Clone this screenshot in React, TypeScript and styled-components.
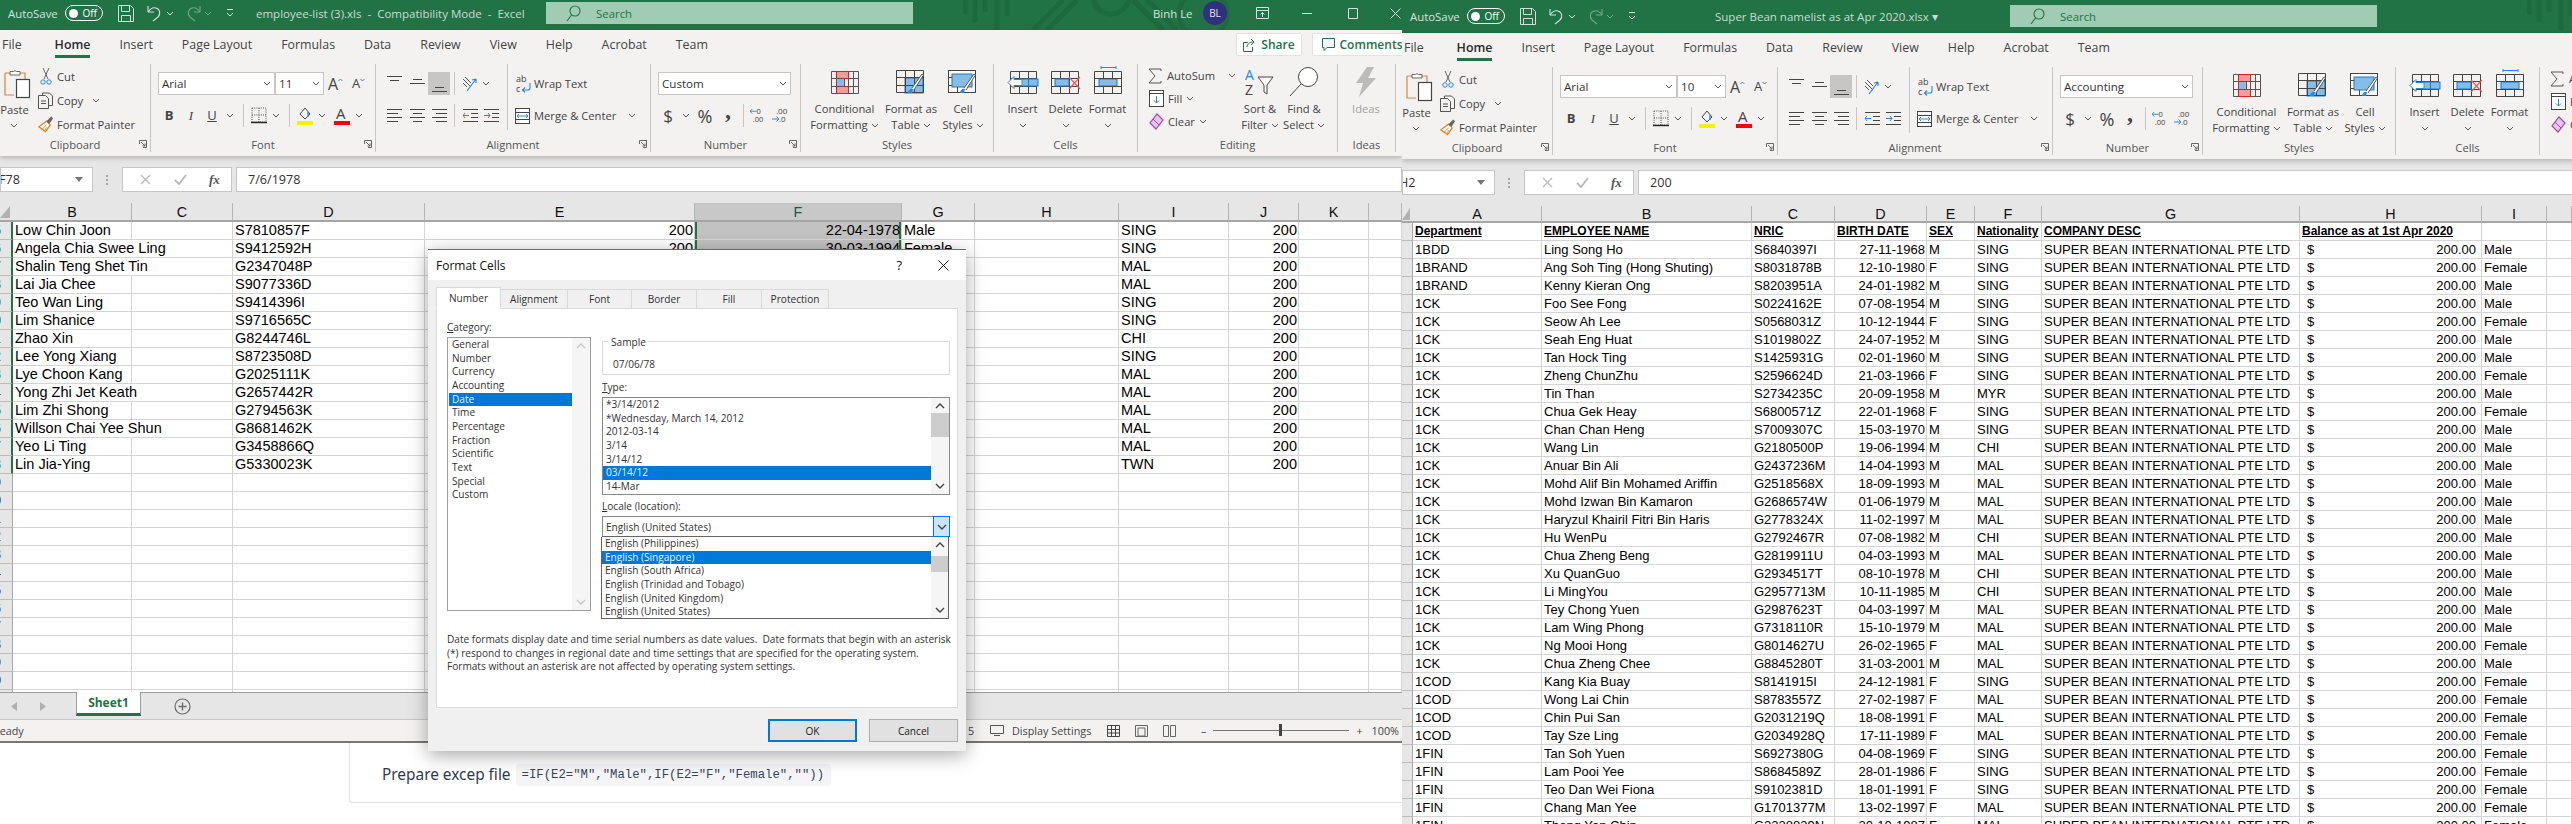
import type { ReactNode } from 'react'
import styled, { createGlobalStyle } from 'styled-components'

const uiFont = `"Open Sans", "Noto Sans", sans-serif`
const cellFont = `"Liberation Sans", Arial, sans-serif`
const green = '#217346'

const GlobalStyle = createGlobalStyle`
  html, body { margin: 0; padding: 0; background: #fff; overflow: hidden; }
  * { box-sizing: border-box; }
`

const Page = styled.div`
  position: relative;
  display: flex;
  width: 2572px;
  height: 824px;
  overflow: hidden;
  background: #fff;
  font-family: ${uiFont};
`

const LeftColumn = styled.div`
  width: 1402px;
  flex: none;
  display: flex;
  flex-direction: column;
`

const RightColumn = styled.div`
  width: 1170px;
  flex: none;
`

const Window = styled.div<{ $height: number }>`
  display: flex;
  flex-direction: column;
  width: 100%;
  height: ${(p) => p.$height}px;
  overflow: hidden;
  background: #fff;
`

/* ---------- title bar ---------- */

const TitleBar = styled.div<{ $height: number }>`
  position: relative;
  flex: none;
  display: flex;
  align-items: flex-end;
  width: 1402px;
  height: ${(p) => p.$height}px;
  background: ${green};
  color: #d3e5db;
  font-size: 11.4px;
`

const TitleInner = styled.div`
  position: relative;
  display: flex;
  align-items: center;
  width: 100%;
  height: 26px;
  margin-bottom: 4px;
`

const Pattern = styled.svg<{ $left: number }>`
  position: absolute;
  top: 0;
  left: ${(p) => p.$left}px;
`

const AutoSave = styled.span`
  margin-left: 8px;
  width: 57px;
  white-space: nowrap;
`

const Toggle = styled.span`
  display: flex;
  align-items: center;
  justify-content: space-between;
  width: 38px;
  height: 16px;
  padding: 0 5px 0 3px;
  border: 1px solid #fff;
  border-radius: 8px;
  color: #fff;
  font-size: 10px;

  &::before {
    content: '';
    width: 9px;
    height: 9px;
    border-radius: 50%;
    background: #fff;
  }
`

const QuickIcon = styled.span<{ $w: number; $ml: number }>`
  display: flex;
  align-items: center;
  justify-content: center;
  width: ${(p) => p.$w}px;
  margin-left: ${(p) => p.$ml}px;
`

const DocTitle = styled.div<{ $left: number; $width: number }>`
  margin-left: ${(p) => p.$left}px;
  width: ${(p) => p.$width}px;
  font-size: 11.5px;
  color: #c8ddd1;
  white-space: pre;
`

const SearchBox = styled.div`
  display: flex;
  align-items: center;
  width: 367px;
  height: 22px;
  padding-left: 20px;
  background: #a0ccb3;
  color: ${green};
  gap: 15px;
`

const UserArea = styled.div`
  position: relative;
  display: flex;
  align-items: center;
  margin-left: auto;
  width: 249px;
`

const UserName = styled.span`
  width: 50px;
  white-space: nowrap;
`

const Avatar = styled.span`
  display: flex;
  align-items: center;
  justify-content: center;
  width: 24px;
  height: 24px;
  border-radius: 50%;
  background: #30307e;
  color: #e3e6f2;
  font-size: 10px;
`

const WinIcon = styled.span<{ $ml: number }>`
  display: flex;
  margin-left: ${(p) => p.$ml}px;
`

/* ---------- ribbon ---------- */

const RibbonWrap = styled.div`
  position: relative;
  z-index: 2;
  flex: none;
  width: 1402px;
  height: 126px;
  background: #f3f2f1;
  color: #444;
  font-size: 11.2px;
  box-shadow: 0 2px 5px rgba(0, 0, 0, 0.22);
`

const TabRow = styled.div`
  display: flex;
  align-items: flex-start;
  height: 28px;
  padding: 3px 0 0 2px;
  gap: 29px;
  font-size: 12.4px;
`

const TabItem = styled.span<{ $active?: boolean }>`
  height: 25px;
  padding-top: 3px;
  line-height: 17px;
  white-space: nowrap;
  color: ${(p) => (p.$active ? '#2a2a2a' : '#444')};
  font-weight: ${(p) => (p.$active ? 600 : 400)};
  border-bottom: ${(p) => (p.$active ? `3px solid ${green}` : '3px solid transparent')};

  &:first-child {
    margin-right: 4px;
  }
`

const Actions = styled.div`
  display: flex;
  margin-left: auto;
  width: 166px;
  gap: 10px;
  flex: none;
`

const ActionButton = styled.span<{ $w: number }>`
  display: flex;
  align-items: center;
  justify-content: center;
  gap: 5px;
  flex: none;
  width: ${(p) => p.$w}px;
  height: 23px;
  background: #fff;
  border: 1px solid #e4e2e0;
  border-radius: 2px;
  color: ${green};
  font-size: 12px;
  font-weight: 600;
`

const GroupRow = styled.div`
  display: flex;
  height: 98px;
  padding: 6px 0 4px;
`

const Group = styled.div<{ $w: number }>`
  display: flex;
  flex-direction: column;
  flex: none;
  width: ${(p) => p.$w}px;
  border-right: 1px solid #c8c6c4;
`

const GroupBody = styled.div<{ $pl?: number }>`
  flex: 1;
  display: flex;
  padding-left: ${(p) => p.$pl ?? 0}px;
  min-height: 0;
`

const GroupLabel = styled.div<{ $dim?: boolean }>`
  display: grid;
  grid-template-columns: 1fr auto 1fr;
  align-items: center;
  height: 16px;
  color: ${(p) => (p.$dim ? '#605e5c' : '#555')};
  white-space: nowrap;
`

const Launcher = styled.span`
  grid-column: 3;
  justify-self: end;
  display: flex;
  margin-right: 3px;
`

const TwoRows = styled.div<{ $w?: number; $divider?: boolean }>`
  display: flex;
  flex-direction: column;
  gap: 9px;
  padding-top: 8px;
  flex: none;
  width: ${(p) => (p.$w ? `${p.$w}px` : 'auto')};
  ${(p) => (p.$divider ? 'position: relative; height: 66px; border-right: 1px solid #c8c6c4;' : '')}
`

const ToolRow = styled.div<{ $pl?: number }>`
  display: flex;
  align-items: center;
  height: 23px;
  padding-left: ${(p) => p.$pl ?? 0}px;
  white-space: nowrap;
`

const Tool = styled.span<{ $w: number; $ml?: number; $on?: boolean; $h?: number }>`
  display: flex;
  align-items: center;
  justify-content: center;
  flex: none;
  width: ${(p) => p.$w}px;
  height: ${(p) => p.$h ?? 23}px;
  margin-left: ${(p) => p.$ml ?? 0}px;
  background: ${(p) => (p.$on ? '#c8c6c4' : 'transparent')};
`

const ToolSep = styled.span<{ $ml: number }>`
  flex: none;
  width: 1px;
  height: 23px;
  margin-left: ${(p) => p.$ml}px;
  background: #c8c6c4;
`

const Glyph = styled.span<{ $size: number; $serif?: boolean; $bold?: boolean; $color?: string }>`
  font-family: ${(p) => (p.$serif ? `"Liberation Serif", serif` : uiFont)};
  font-size: ${(p) => p.$size}px;
  font-weight: ${(p) => (p.$bold ? 700 : 400)};
  color: ${(p) => p.$color ?? '#444'};
  line-height: 1;
`

const SelectBox = styled.div<{ $w: number; $ml?: number }>`
  display: flex;
  align-items: center;
  justify-content: space-between;
  flex: none;
  width: ${(p) => p.$w}px;
  height: 23px;
  margin-left: ${(p) => p.$ml ?? 0}px;
  padding: 0 3px 0 3px;
  background: #fff;
  border: 1px solid #c8c6c4;
  font-size: 11.6px;
  color: #333;
`

const PasteColumn = styled.div`
  width: 34px;
  display: flex;
  flex-direction: column;
  align-items: center;
  padding-top: 4px;
  flex: none;
`

const PasteLabel = styled.span`
  line-height: 16px;
  margin-top: 3px;
  margin-left: -5px;
`

const ClipColumn = styled.div`
  display: flex;
  flex-direction: column;
  margin-left: 4px;
`

const ClipRow = styled.div`
  display: flex;
  align-items: center;
  gap: 3px;
  height: 24px;
  white-space: nowrap;
`

const ClipIcon = styled.span`
  display: flex;
  justify-content: center;
  width: 16px;
`

const LargeButton = styled.div<{ $w: number; $dim?: boolean }>`
  display: flex;
  flex-direction: column;
  align-items: center;
  flex: none;
  width: ${(p) => p.$w}px;
  text-align: center;
  color: ${(p) => (p.$dim ? '#a19f9d' : '#444')};
`

const LargeIcon = styled.div`
  display: flex;
  align-items: center;
  justify-content: center;
  height: 36px;
  margin-bottom: 1px;
`

const LargeLine = styled.div`
  display: flex;
  align-items: center;
  justify-content: center;
  gap: 3px;
  height: 16px;
  line-height: 16px;
  white-space: nowrap;
`

const EditColumn = styled.div`
  display: flex;
  flex-direction: column;
  width: 90px;
  flex: none;
`

const EditRow = styled.div`
  display: flex;
  align-items: center;
  height: 23px;
  gap: 4px;
`

/* ---------- formula bar ---------- */

const FormulaBar = styled.div`
  flex: none;
  display: flex;
  width: 1402px;
  height: 47px;
  padding-top: 11px;
  background: #e6e6e6;
`

const FormulaBox = styled.div<{ $w?: number; $ml?: number }>`
  display: flex;
  align-items: center;
  flex: ${(p) => (p.$w ? 'none' : 1)};
  width: ${(p) => (p.$w ? `${p.$w}px` : 'auto')};
  height: 25px;
  margin-left: ${(p) => p.$ml ?? 0}px;
  background: #fff;
  border: 1px solid #c6c6c6;
  font-size: 12.6px;
  color: #333;
  overflow: hidden;
`

const NameText = styled.span<{ $shift: number }>`
  margin-left: ${(p) => p.$shift}px;
  flex: 1;
`

const FxText = styled.span`
  font-family: "Liberation Serif", serif;
  font-style: italic;
  font-weight: 700;
  font-size: 13px;
  color: #555;
`

const Dots = styled.span`
  display: flex;
  flex-direction: column;
  justify-content: center;
  gap: 2px;
  width: 30px;
  padding-left: 13px;
  height: 25px;

  & > i {
    width: 2px;
    height: 2px;
    background: #a6a6a6;
  }
`

/* ---------- sheet ---------- */

const ColumnHeader = styled.div<{ $cols: string; $height: number }>`
  flex: none;
  display: grid;
  grid-template-columns: ${(p) => p.$cols};
  height: ${(p) => p.$height}px;
  background: #e6e6e6;
  border-bottom: 2px solid #a6a6a6;
  font-family: ${cellFont};
  font-size: 14.4px;
  color: #111;
`

const ColumnCell = styled.div<{ $sel?: boolean }>`
  display: flex;
  align-items: center;
  justify-content: center;
  border-right: 1px solid #b4b4b4;
  background: ${(p) => (p.$sel ? '#c8c8c8' : 'transparent')};
  color: ${(p) => (p.$sel ? '#1a5c38' : '#111')};
`

const Corner = styled.div`
  display: flex;
  align-items: flex-end;
  justify-content: flex-end;
  padding: 0 3px 2px 0;

  &::after {
    content: '';
    width: 10px;
    height: 12px;
    background: #b2b2b2;
    clip-path: polygon(100% 0, 100% 100%, 0 100%);
  }
`

const RowsArea = styled.div`
  flex: 1;
  overflow: hidden;
  min-height: 0;
`

const SheetRow = styled.div<{ $cols: string; $size: number }>`
  display: grid;
  grid-template-columns: ${(p) => p.$cols};
  height: 18px;
  font-family: ${cellFont};
  font-size: ${(p) => p.$size}px;
  line-height: 17px;
  color: #000;
`

const RowHead = styled.div<{ $sel?: boolean }>`
  display: flex;
  justify-content: flex-end;
  overflow: hidden;
  background: #e6e6e6;
  border-bottom: 1px solid #bcbcbc;
  border-right: ${(p) => (p.$sel ? `2px solid ${green}` : '1px solid #a8a8a8')};
  color: ${(p) => (p.$sel ? '#1a5c38' : '#222')};
  padding-right: ${(p) => (p.$sel ? 4 : 5)}px;
`

const RowNumber = styled.span`
  flex: none;
  width: 28px;
  text-align: center;
`

const Cell = styled.div<{
  $right?: boolean
  $open?: boolean
  $bold?: boolean
  $sel?: boolean
  $between?: boolean
}>`
  display: flex;
  justify-content: ${(p) => (p.$between ? 'space-between' : p.$right ? 'flex-end' : 'flex-start')};
  padding: 0 ${(p) => (p.$between ? 5 : 1)}px 0 ${(p) => (p.$between ? 7 : 2)}px;
  white-space: nowrap;
  border-bottom: 1px solid #d4d4d4;
  border-right: ${(p) => (p.$open ? '1px solid transparent' : '1px solid #d4d4d4')};
  background: ${(p) => (p.$sel ? '#c2c2c2' : 'transparent')};
  font-weight: ${(p) => (p.$bold ? 700 : 400)};
  font-size: ${(p) => (p.$bold ? '12px' : 'inherit')};
  text-decoration: ${(p) => (p.$bold ? 'underline' : 'none')};
  ${(p) => (p.$sel ? `box-shadow: inset 2px 0 0 ${green}, inset -2px 0 0 ${green};` : '')}
`

const TabBar = styled.div`
  flex: none;
  display: flex;
  height: 28px;
  background: #e6e6e6;
  border-top: 1px solid #9d9d9d;
  border-bottom: 1px solid #c8c8c8;
  font-family: ${uiFont};
`

const SheetArrow = styled.span<{ $ml: number }>`
  margin-left: ${(p) => p.$ml}px;
  width: 8px;
  display: flex;
  align-items: center;
`

const SheetTab = styled.span`
  display: flex;
  align-items: center;
  justify-content: center;
  width: 65px;
  height: 24px;
  margin-left: 28px;
  margin-top: -1px;
  background: #fff;
  border-left: 1px solid #9d9d9d;
  border-right: 1px solid #9d9d9d;
  border-bottom: 3px solid ${green};
  color: ${green};
  font-size: 12px;
  font-weight: 700;
`

const AddSheet = styled.span`
  display: flex;
  align-items: center;
  margin-left: 33px;
`

const StatusBar = styled.div`
  flex: none;
  display: flex;
  align-items: center;
  height: 23px;
  background: #f3f2f1;
  border-bottom: 2px solid #767676;
  color: #444;
  font-size: 10.8px;
`

const Ready = styled.span`
  margin-left: -7px;
`

const StatusTools = styled.div`
  display: flex;
  align-items: center;
  margin-left: auto;
  width: 434px;
  white-space: nowrap;
`

const ZoomTrack = styled.div`
  position: relative;
  width: 136px;
  height: 1px;
  margin: 0 7px;
  background: #777;

  &::after {
    content: '';
    position: absolute;
    left: 66px;
    top: -6px;
    width: 3px;
    height: 12px;
    background: #444;
  }
`

/* ---------- note under the left window ---------- */

const NoteCard = styled.div`
  display: flex;
  align-items: center;
  gap: 5px;
  flex: none;
  height: 60px;
  margin-left: 349px;
  padding: 4px 0 0 32px;
  border-left: 1px solid #e1e1e8;
  border-bottom: 1px solid #e1e1e8;
  border-bottom-left-radius: 4px;
  font-family: "Noto Sans", sans-serif;
  font-size: 15.4px;
  color: #2d3b52;
`

const CodeChip = styled.code`
  display: flex;
  align-items: center;
  height: 22px;
  padding: 0 7px 0 6px;
  background: #f5f5f7;
  border-radius: 3px;
  font-family: "Liberation Mono", monospace;
  font-size: 12.3px;
  color: #38465c;
`

/* ---------- format cells dialog ---------- */

const Dialog = styled.div`
  position: absolute;
  top: 249px;
  left: 428px;
  z-index: 10;
  display: flex;
  flex-direction: column;
  width: 538px;
  height: 502px;
  background: #f0f0f0;
  border-top: 1px solid #6a6a6a;
  box-shadow: 0 4px 18px rgba(0, 0, 0, 0.35);
  font-size: 10.1px;
  color: #333;
`

const DialogTitle = styled.div`
  flex: none;
  display: flex;
  align-items: center;
  height: 30px;
  padding-left: 8px;
  background: #fff;
  color: #111;
  font-size: 12px;
`

const DialogHelp = styled.span`
  margin-left: auto;
  font-size: 13px;
  margin-right: 36px;
`

const DialogClose = styled.span`
  display: flex;
  margin-right: 17px;
`

const DialogContent = styled.div`
  flex: 1;
  display: flex;
  flex-direction: column;
  padding: 8px 8px 0;
`

const DialogTabs = styled.div`
  flex: none;
  display: flex;
  align-items: flex-end;
  height: 21px;
  margin-bottom: -1px;
`

const DialogTab = styled.span<{ $w: number; $active?: boolean }>`
  position: relative;
  display: flex;
  align-items: center;
  justify-content: center;
  width: ${(p) => p.$w}px;
  height: ${(p) => (p.$active ? 22 : 20)}px;
  background: ${(p) => (p.$active ? '#fff' : '#f0f0f0')};
  border: 1px solid #d9d9d9;
  border-bottom: ${(p) => (p.$active ? '1px solid #fff' : '1px solid #d9d9d9')};
  border-left-width: ${(p) => (p.$active ? 1 : 0)}px;
  z-index: ${(p) => (p.$active ? 1 : 0)};
`

const Pane = styled.div`
  flex: none;
  display: flex;
  flex-direction: column;
  height: 400px;
  padding: 11px 10px 0;
  background: #fff;
  border: 1px solid #d9d9d9;
`

const PaneGrid = styled.div`
  display: grid;
  grid-template-columns: 144px 348px;
  column-gap: 11px;
`

const PaneColumn = styled.div<{ $pt?: number }>`
  display: flex;
  flex-direction: column;
  padding-top: ${(p) => p.$pt ?? 0}px;
`

const FieldLabel = styled.div<{ $mt?: number }>`
  height: 14px;
  line-height: 14px;
  margin-top: ${(p) => p.$mt ?? 0}px;
  margin-bottom: 3px;

  & > u {
    text-underline-offset: 1px;
  }
`

const ListFrame = styled.div<{ $h: number; $border: string }>`
  display: flex;
  height: ${(p) => p.$h}px;
  background: #fff;
  border: 1px solid ${(p) => p.$border};
  overflow: hidden;
`

const ListItems = styled.div`
  flex: 1;
  min-width: 0;
`

const ListItem = styled.div<{ $selected?: boolean }>`
  height: 13.67px;
  line-height: 13.67px;
  padding-left: 3px;
  white-space: nowrap;
  background: ${(p) => (p.$selected ? '#0078d7' : 'transparent')};
  color: ${(p) => (p.$selected ? '#e8f2fb' : '#333')};
`

const ListScroll = styled.div<{ $w: number; $pale?: boolean }>`
  flex: none;
  display: flex;
  flex-direction: column;
  align-items: center;
  justify-content: space-between;
  width: ${(p) => p.$w}px;
  padding: 5px 0;
  background: ${(p) => (p.$pale ? '#f0f0f0' : '#f5f5f5')};
`

const ScrollThumb = styled.div<{ $h: number; $top: number }>`
  flex: none;
  width: 100%;
  height: ${(p) => p.$h}px;
  margin-top: ${(p) => p.$top}px;
  margin-bottom: auto;
  background: #cdcdcd;
`

const SampleGroup = styled.div`
  position: relative;
  height: 34px;
  padding: 15px 0 0 10px;
  border: 1px solid #dcdcdc;
`

const SampleLegend = styled.span`
  position: absolute;
  top: -7px;
  left: 6px;
  padding: 0 2px;
  background: #fff;
`

const ComboValue = styled.div`
  display: flex;
  align-items: center;
  justify-content: space-between;
  height: 21px;
  padding-left: 3px;
  background: #fff;
  border: 1px solid #8a8a8a;
  border-bottom-color: #646464;
`

const ComboButton = styled.span`
  display: flex;
  align-items: center;
  justify-content: center;
  width: 17px;
  height: 21px;
  margin-right: -1px;
  background: #cce4f7;
  border: 1px solid #0078d7;
`

const DropList = styled.div`
  display: flex;
  height: 82px;
  margin-left: -1px;
  margin-right: 1px;
  background: #fff;
  border: 1px solid #646464;
  border-top: 0;
  overflow: hidden;
`

const HelpText = styled.div`
  margin-top: 14px;
  line-height: 13.67px;
  white-space: pre;
`

const DialogFooter = styled.div`
  display: flex;
  justify-content: flex-end;
  gap: 12px;
  padding-top: 11px;
`

const DialogButton = styled.span<{ $primary?: boolean }>`
  display: flex;
  align-items: center;
  justify-content: center;
  width: 89px;
  height: 23px;
  background: #e1e1e1;
  border: ${(p) => (p.$primary ? '2px solid #0078d7' : '1px solid #adadad')};
  color: #222;
`

/* ---------- icons ---------- */

type IconProps = { color?: string; size?: number }

const Chevron = ({ color = '#555' }: IconProps) => (
  <svg width="8" height="5" viewBox="0 0 8 5" fill="none">
    <path d="M1 1l3 3 3-3" stroke={color} strokeWidth="1" />
  </svg>
)

const ScrollUp = ({ color = '#555' }: IconProps) => (
  <svg width="10" height="6" viewBox="0 0 10 6" fill="none">
    <path d="M1 5l4-4 4 4" stroke={color} strokeWidth="1.4" />
  </svg>
)

const ScrollDown = ({ color = '#555' }: IconProps) => (
  <svg width="10" height="6" viewBox="0 0 10 6" fill="none">
    <path d="M1 1l4 4 4-4" stroke={color} strokeWidth="1.4" />
  </svg>
)

const SaveIcon = () => (
  <svg width="16" height="17" viewBox="0 0 16 17" fill="none" stroke="#cfe2d7">
    <path d="M.5.5h12l3 3v13H.5z" />
    <path d="M3.5.5v6h8v-6M3.5 16.5v-6h9v6" />
  </svg>
)

const UndoIcon = ({ color = '#cfe2d7' }: IconProps) => (
  <svg width="15" height="18" viewBox="0 0 15 18" fill="none" stroke={color} strokeWidth="1.1">
    <path d="M1 8V2M1 8h6" />
    <path d="M1 8c2-3 5-5 8-4 4 1 5 6 2 9l-5 4" />
  </svg>
)

const RedoIcon = () => (
  <svg width="15" height="18" viewBox="0 0 15 18" fill="none" stroke="#6ea98a" strokeWidth="1.1">
    <path d="M14 8V2M14 8H8" />
    <path d="M14 8c-2-3-5-5-8-4-4 1-5 6-2 9l5 4" />
  </svg>
)

const CustomizeIcon = () => (
  <svg width="8" height="8" viewBox="0 0 8 8" fill="none" stroke="#cfe2d7">
    <path d="M1 .5h6M1 4l3 3 3-3" />
  </svg>
)

const SearchIcon = () => (
  <svg width="15" height="17" viewBox="0 0 15 17" fill="none" stroke={green} strokeWidth="1.1">
    <circle cx="9" cy="6" r="5" />
    <path d="M5.5 10L1 16" />
  </svg>
)

const PasteIcon = () => (
  <svg width="27" height="31" viewBox="0 0 27 31" fill="none">
    <path d="M1 5h5M16 5h5v6M1 5v22h9" stroke="#d9883c" strokeWidth="1.2" />
    <path d="M6 7V3.5h3.5a2 2 0 0 1 3 0H16V7z" fill="#fff" stroke="#666" />
    <rect x="12.5" y="11.5" width="13" height="18" fill="#fff" stroke="#444" strokeWidth="1.2" />
  </svg>
)

const ScissorsIcon = () => (
  <svg width="12" height="17" viewBox="0 0 12 17" fill="none" strokeWidth="1">
    <path d="M3 0l5 11M9 0L4 11" stroke="#666" />
    <circle cx="3" cy="14" r="2.2" stroke="#2b88d8" />
    <circle cx="9" cy="14" r="2.2" stroke="#2b88d8" />
  </svg>
)

const CopyIcon = () => (
  <svg width="16" height="17" viewBox="0 0 16 17" fill="none" stroke="#555">
    <path d="M4.5 3.5V1h7l3 3v9.5H11" />
    <path d="M.5 3.5h7l3 3v10H.5zM3 9h5M3 11.5h5" />
  </svg>
)

const PainterIcon = () => (
  <svg width="17" height="18" viewBox="0 0 17 18" fill="none">
    <path d="M9 6l4 4-5 7-7-5z" fill="#fff" stroke="#e8821e" strokeWidth="1.3" />
    <path d="M4 15l5-5M6.5 16.5l3-4" stroke="#e8821e" />
    <path d="M9 6l5-5 2 2-4 6z" fill="#666" />
  </svg>
)

const LinesIcon = ({ rows, widths, offset = 0 }: { rows: number[]; widths: [number, number][]; offset?: number }) => (
  <svg width="15" height="17" viewBox="0 0 15 17" fill="none" stroke="#444" strokeWidth="1">
    {rows.map((y, i) => (
      <path key={y} d={`M${widths[i][0]} ${y + 0.5 + offset}H${widths[i][1]}`} />
    ))}
  </svg>
)

const AlignIcon = ({ kind }: { kind: 'top' | 'middle' | 'bottom' | 'left' | 'center' | 'right' }) => {
  const full: [number, number] = [0, 15]
  const small: [number, number] = [3, 12]
  if (kind === 'top') return <LinesIcon rows={[1, 5, 9]} widths={[full, small, [0, 0]]} />
  if (kind === 'middle') return <LinesIcon rows={[4, 8, 12]} widths={[small, full, [0, 0]]} />
  if (kind === 'bottom') return <LinesIcon rows={[8, 12, 16]} widths={[[0, 0], small, full]} />
  if (kind === 'left') return <LinesIcon rows={[2, 6, 10, 14]} widths={[full, [0, 11], full, [0, 11]]} />
  if (kind === 'center') return <LinesIcon rows={[2, 6, 10, 14]} widths={[full, small, full, small]} />
  return <LinesIcon rows={[2, 6, 10, 14]} widths={[full, [4, 15], full, [4, 15]]} />
}

const OrientationIcon = () => (
  <svg width="16" height="16" viewBox="0 0 16 16" fill="none">
    <path d="M1 3l7 7M3 1l6 6M1 7l4 4" stroke="#555" />
    <path d="M5 15L14 3M14 3l-4 1M14 3v4" stroke="#2b88d8" strokeWidth="1.2" />
  </svg>
)

const WrapIcon = () => (
  <svg width="15" height="20" viewBox="0 0 15 20" fill="none">
    <text x="0" y="8" fontSize="9" fill="#444" fontFamily={uiFont}>ab</text>
    <text x="0" y="18" fontSize="9" fill="#444" fontFamily={uiFont}>c</text>
    <path d="M14 9v5a2 2 0 0 1-2 2H7M9 13.5L6.5 16 9 18.5" stroke="#2b88d8" strokeWidth="1.1" />
  </svg>
)

const MergeIcon = () => (
  <svg width="15" height="16" viewBox="0 0 15 16" fill="none">
    <rect x=".5" y=".5" width="14" height="15" stroke="#444" fill="#fff" />
    <path d="M.5 4.5h14M.5 11.5h14" stroke="#444" />
    <path d="M2 8h11M4 6L2 8l2 2M11 6l2 2-2 2" stroke="#2b88d8" />
  </svg>
)

const IndentIcon = ({ flip }: { flip?: boolean }) => (
  <svg width="15" height="15" viewBox="0 0 15 15" fill="none">
    <path d="M0 1.5h15M0 13.5h15" stroke="#444" />
    <path d="M8 5.5h7M8 9.5h7" stroke="#444" />
    {flip ? (
      <path d="M0 7.5h6M4 5l2 2.5L4 10" stroke="#2b88d8" />
    ) : (
      <path d="M6 7.5H0M2 5L0 7.5 2 10" stroke="#2b88d8" />
    )}
  </svg>
)

const BorderIcon = () => (
  <svg width="16" height="17" viewBox="0 0 16 17" fill="none">
    <path d="M1 1h14v14H1zM8 1v14M1 8h14" stroke="#555" strokeDasharray="1 1.2" />
    <path d="M0 15.5h16" stroke="#222" strokeWidth="1.4" />
  </svg>
)

const FillIcon = () => (
  <svg width="16" height="19" viewBox="0 0 16 19" fill="none">
    <path d="M3 8l5-6 5 6-5 5z" stroke="#444" />
    <path d="M11 6v5" stroke="#2b88d8" strokeWidth="1.4" />
    <rect y="15" width="16" height="4" fill="#ffef00" />
  </svg>
)

const FontColorIcon = () => (
  <svg width="16" height="19" viewBox="0 0 16 19">
    <text x="2" y="13" fontSize="15" fill="#444" fontFamily={uiFont}>A</text>
    <rect y="15" width="16" height="4" fill="#f00" />
  </svg>
)

const DecimalIcon = ({ more }: { more?: boolean }) => (
  <svg width="16" height="17" viewBox="0 0 16 17" fill="none">
    <text x={more ? 4 : 7} y="7" fontSize="8" fill="#444" fontFamily={uiFont}>{more ? '.00' : '0'}</text>
    <text x={more ? 7 : 3} y="15" fontSize="8" fill="#444" fontFamily={uiFont}>{more ? '.0' : '.00'}</text>
    {more ? (
      <path d="M0 12h7M4.5 9.5L7 12l-2.5 2.5" stroke="#2b88d8" />
    ) : (
      <path d="M7 4H0M2.5 1.500L0 4l2.500 2.500" stroke="#2b88d8" />
    )}
  </svg>
)

const ConditionalIcon = () => (
  <svg width="28" height="23" viewBox="0 0 28 23" fill="none">
    <rect x="5" y="1" width="12" height="7" fill="#f79a9a" />
    <rect x="5" y="8" width="8" height="7" fill="#85bce8" />
    <rect x="5" y="15" width="12" height="7" fill="#f79a9a" />
    <path d="M.5.500h27v22H.5zM5.500.500v22M17.500.500v22M22.500.500v22M.500 7.500h27M.500 15.500h27" stroke="#555" />
    <path d="M5.500.500h12v7h-4v8h4v7h-12z" stroke="#e02020" />
  </svg>
)

const Brush = (): ReactNode => (
  <g>
    <path d="M12 23c0-3 3-5 5-4l-1 4z" fill="#2b88d8" />
    <path d="M16 18L26 4l1.500 1L18 20" fill="#fff" stroke="#555" />
  </g>
)

const TableStyleIcon = () => (
  <svg width="30" height="25" viewBox="0 0 30 25" fill="none">
    <rect x="9" y="8" width="18" height="15" fill="#85bce8" stroke="#1f78c8" />
    <path d="M.5.500h27v22H.5zM9.500.500v22M18.500.500v22M.500 7.500h27M.500 15.500h27" stroke="#444" />
    <Brush />
  </svg>
)

const CellStyleIcon = () => (
  <svg width="30" height="25" viewBox="0 0 30 25" fill="none">
    <rect x=".5" y=".500" width="27" height="22" fill="#fff" stroke="#444" />
    <rect x="4" y="4" width="20" height="13" fill="#85bce8" stroke="#1f78c8" />
    <path d="M.5 7.500H4M.5 15.500H4M9.500 17v5" stroke="#444" />
    <Brush />
  </svg>
)

const InsertIcon = () => (
  <svg width="32" height="23" viewBox="0 0 32 23" fill="none">
    <path d="M3.500.500h26v22h-26zM12.500.500v22M21.500.500v22M3.500 7.500h26M3.500 15.500h26" stroke="#444" />
    <rect x="12" y="8" width="19" height="7" fill="#85bce8" stroke="#1f78c8" />
    <path d="M21.500 8v7" stroke="#1f78c8" />
    <path d="M1 11.500l6-6v3h8v6H7v3z" fill="#fff" stroke="#2b88d8" />
  </svg>
)

const DeleteIcon = () => (
  <svg width="30" height="23" viewBox="0 0 30 23" fill="none">
    <path d="M.5.500h27v22H.5zM9.500.500v22M18.500.500v22M.500 7.500h27M.500 15.500h27" stroke="#444" />
    <rect x="4" y="8" width="14" height="7" fill="#85bce8" stroke="#1f78c8" />
    <path d="M18 6l11 12M29 6L18 18" stroke="#f25555" strokeWidth="1.2" />
  </svg>
)

const FormatIcon = () => (
  <svg width="28" height="28" viewBox="0 0 28 28" fill="none">
    <path d="M7 1.500h15M7 0v3M22 0v3" stroke="#2b88d8" />
    <g transform="translate(0 5)">
      <rect x="5" y="8" width="18" height="7" fill="#85bce8" stroke="#1f78c8" />
      <path d="M.5.500h27v22H.5zM9.500.500v7M18.500.500v7M9.500 15.500v7M18.500 15.500v7M.500 7.500h27M.500 15.500h27" stroke="#444" />
    </g>
  </svg>
)

const SigmaIcon = () => (
  <svg width="14" height="16" viewBox="0 0 14 16" fill="none" stroke="#555">
    <path d="M13 3V1H1l6 7-6 7h12v-2" />
  </svg>
)

const FillDownIcon = () => (
  <svg width="15" height="17" viewBox="0 0 15 17" fill="none">
    <rect x=".5" y=".5" width="14" height="16" fill="#fff" stroke="#444" />
    <path d="M.5 3.500h14" stroke="#444" />
    <path d="M7.500 6v7M5 10.500l2.500 2.500 2.500-2.500" stroke="#2b88d8" />
  </svg>
)

const EraserIcon = () => (
  <svg width="15" height="17" viewBox="0 0 15 17" fill="none">
    <path d="M8 1l6 6-7 9-6-6z" fill="#e6c6ec" stroke="#a146b8" strokeWidth="1.2" />
    <path d="M4 6l6 6" stroke="#a146b8" />
  </svg>
)

const SortFilterIcon = () => (
  <svg width="30" height="28" viewBox="0 0 30 28" fill="none">
    <text x="0" y="12" fontSize="14" fill="#2b88d8" fontFamily={uiFont}>A</text>
    <text x="0" y="27" fontSize="14" fill="#444" fontFamily={uiFont}>Z</text>
    <path d="M13 9h15l-6 8v9l-3-2v-7z" fill="#fff" stroke="#444" />
  </svg>
)

const FindIcon = () => (
  <svg width="30" height="30" viewBox="0 0 30 30" fill="none" stroke="#444">
    <circle cx="19" cy="10" r="9.500" fill="#fff" />
    <path d="M12 17L1 29" />
  </svg>
)

const IdeasIcon = () => (
  <svg width="22" height="30" viewBox="0 0 22 30" fill="#bdbbb9">
    <path d="M12 0L1 16h7L4 30l17-19h-8l6-11z" />
  </svg>
)

const LauncherIcon = () => (
  <svg width="8" height="8" viewBox="0 0 8 8" fill="none" stroke="#666">
    <path d="M.5 4V.5H7.500V7.500H4M2 2l4 4M6 3.500V6H3.500" />
  </svg>
)

const ShareIcon = () => (
  <svg width="13" height="14" viewBox="0 0 13 14" fill="none" stroke={green}>
    <path d="M5 4.500H.5v9h9V9M4 9c0-3 3-5 6-5M8 1l3 3-3 3" />
  </svg>
)

const CommentIcon = () => (
  <svg width="13" height="13" viewBox="0 0 13 13" fill="none" stroke={green}>
    <path d="M.5.500h12v9H5l-3 3v-3H.5z" />
  </svg>
)

const PatternArt = ({ left }: { left: number }) => (
  <Pattern $left={left} width="270" height="30" viewBox="0 0 270 30" fill="none">
    <g stroke="#1d6a3f" strokeWidth="5">
      <path d="M2 0v14M12 0v22M22 0v12M34 0v30M44 0v16" />
      <path d="M70 30L100 0M84 30L114 0" />
      <path d="M170 0l30 30M184 0l30 30" />
      <circle cx="148" cy="-4" r="18" />
      <circle cx="240" cy="14" r="24" />
    </g>
  </Pattern>
)

/* ---------- ribbon ---------- */

const tabNames = ['Insert', 'Page Layout', 'Formulas', 'Data', 'Review', 'View', 'Help', 'Acrobat', 'Team']

const GroupTitle = ({ title, launcher, dim }: { title: string; launcher?: boolean; dim?: boolean }) => (
  <GroupLabel $dim={dim}>
    <span style={{ gridColumn: 2 }}>{title}</span>
    {launcher && (
      <Launcher>
        <LauncherIcon />
      </Launcher>
    )}
  </GroupLabel>
)

const Ribbon = ({ fontSize, numberFormat }: { fontSize: string; numberFormat: string }) => (
  <RibbonWrap>
    <TabRow>
      <TabItem>File</TabItem>
      <TabItem $active>Home</TabItem>
      {tabNames.map((t) => (
        <TabItem key={t}>{t}</TabItem>
      ))}
      <Actions>
        <ActionButton $w={66}>
          <ShareIcon /> Share
        </ActionButton>
        <ActionButton $w={100}>
          <CommentIcon /> Comments
        </ActionButton>
      </Actions>
    </TabRow>

    <GroupRow>
      <Group $w={151}>
        <GroupBody $pl={0}>
          <PasteColumn>
            <PasteIcon />
            <PasteLabel>Paste</PasteLabel>
            <Tool $w={12} $h={14} $ml={-6}>
              <Chevron />
            </Tool>
          </PasteColumn>
          <ClipColumn>
            <ClipRow>
              <ClipIcon><ScissorsIcon /></ClipIcon>
              Cut
            </ClipRow>
            <ClipRow>
              <ClipIcon><CopyIcon /></ClipIcon>
              Copy
              <Tool $w={14} $ml={3}><Chevron /></Tool>
            </ClipRow>
            <ClipRow>
              <ClipIcon><PainterIcon /></ClipIcon>
              Format Painter
            </ClipRow>
          </ClipColumn>
        </GroupBody>
        <GroupTitle title="Clipboard" launcher />
      </Group>

      <Group $w={225}>
        <GroupBody>
          <TwoRows>
            <ToolRow $pl={7}>
              <SelectBox $w={117}>
                Arial <Chevron />
              </SelectBox>
              <SelectBox $w={49}>
                {fontSize} <Chevron />
              </SelectBox>
              <Tool $w={15} $ml={4}>
                <Glyph $size={16}>A</Glyph>
                <svg width="5" height="4" viewBox="0 0 5 4" fill="none" style={{ marginBottom: 8 }}>
                  <path d="M.5 3l2-2 2 2" stroke="#2b88d8" />
                </svg>
              </Tool>
              <Tool $w={15} $ml={8}>
                <Glyph $size={13}>A</Glyph>
                <svg width="5" height="4" viewBox="0 0 5 4" fill="none" style={{ marginBottom: 8 }}>
                  <path d="M.5 1l2 2 2-2" stroke="#2b88d8" />
                </svg>
              </Tool>
            </ToolRow>
            <ToolRow $pl={7}>
              <Tool $w={22}><Glyph $size={13} $bold>B</Glyph></Tool>
              <Tool $w={22}><Glyph $size={13} $serif style={{ fontStyle: 'italic' }}>I</Glyph></Tool>
              <Tool $w={20}><Glyph $size={13} style={{ textDecoration: 'underline' }}>U</Glyph></Tool>
              <Tool $w={16}><Chevron /></Tool>
              <ToolSep $ml={5} />
              <Tool $w={16} $ml={7}><BorderIcon /></Tool>
              <Tool $w={16} $ml={1}><Chevron /></Tool>
              <ToolSep $ml={5} />
              <Tool $w={16} $ml={7}><FillIcon /></Tool>
              <Tool $w={16} $ml={1}><Chevron /></Tool>
              <Tool $w={16} $ml={4}><FontColorIcon /></Tool>
              <Tool $w={16} $ml={1}><Chevron /></Tool>
            </ToolRow>
          </TwoRows>
        </GroupBody>
        <GroupTitle title="Font" launcher />
      </Group>

      <Group $w={275}>
        <GroupBody>
          <TwoRows $w={132} $divider>
            <ToolRow>
              <Tool $w={15} $ml={11}><AlignIcon kind="top" /></Tool>
              <Tool $w={15} $ml={8}><AlignIcon kind="middle" /></Tool>
              <Tool $w={22} $ml={3} $on><AlignIcon kind="bottom" /></Tool>
              <ToolSep $ml={4} />
              <Tool $w={16} $ml={7}><OrientationIcon /></Tool>
              <Tool $w={16}><Chevron /></Tool>
            </ToolRow>
            <ToolRow>
              <Tool $w={15} $ml={11}><AlignIcon kind="left" /></Tool>
              <Tool $w={15} $ml={8}><AlignIcon kind="center" /></Tool>
              <Tool $w={15} $ml={7}><AlignIcon kind="right" /></Tool>
              <ToolSep $ml={7} />
              <Tool $w={15} $ml={8}><IndentIcon /></Tool>
              <Tool $w={15} $ml={6}><IndentIcon flip /></Tool>
            </ToolRow>
          </TwoRows>
          <TwoRows>
            <ToolRow>
              <Tool $w={15} $ml={8}><WrapIcon /></Tool>
              <Tool $w={90} $ml={3} style={{ justifyContent: 'flex-start' }}>Wrap Text</Tool>
            </ToolRow>
            <ToolRow>
              <Tool $w={15} $ml={7}><MergeIcon /></Tool>
              <Tool $w={85} $ml={4} style={{ justifyContent: 'flex-start' }}>Merge &amp; Center</Tool>
              <Tool $w={10} $ml={8}><Chevron /></Tool>
            </ToolRow>
          </TwoRows>
        </GroupBody>
        <GroupTitle title="Alignment" launcher />
      </Group>

      <Group $w={150}>
        <GroupBody>
          <TwoRows>
            <ToolRow>
              <SelectBox $w={133} $ml={7}>
                {numberFormat} <Chevron />
              </SelectBox>
            </ToolRow>
            <ToolRow>
              <Tool $w={16} $ml={9}><Glyph $size={17}>$</Glyph></Tool>
              <Tool $w={16} $ml={2}><Chevron /></Tool>
              <Tool $w={20} $ml={1}><Glyph $size={18}>%</Glyph></Tool>
              <Tool $w={16} $ml={5}><Glyph $size={24} $serif $bold style={{ marginTop: -12 }}>,</Glyph></Tool>
              <ToolSep $ml={7} />
              <Tool $w={15} $ml={6}><DecimalIcon /></Tool>
              <Tool $w={16} $ml={7}><DecimalIcon more /></Tool>
            </ToolRow>
          </TwoRows>
        </GroupBody>
        <GroupTitle title="Number" launcher />
      </Group>

      <Group $w={193}>
        <GroupBody $pl={7}>
          <LargeButton $w={73}>
            <LargeIcon><ConditionalIcon /></LargeIcon>
            <LargeLine>Conditional</LargeLine>
            <LargeLine>Formatting <Chevron /></LargeLine>
          </LargeButton>
          <LargeButton $w={60}>
            <LargeIcon><TableStyleIcon /></LargeIcon>
            <LargeLine>Format as</LargeLine>
            <LargeLine>Table <Chevron /></LargeLine>
          </LargeButton>
          <LargeButton $w={44}>
            <LargeIcon><CellStyleIcon /></LargeIcon>
            <LargeLine>Cell</LargeLine>
            <LargeLine>Styles <Chevron /></LargeLine>
          </LargeButton>
        </GroupBody>
        <GroupTitle title="Styles" />
      </Group>

      <Group $w={144}>
        <GroupBody $pl={7}>
          <LargeButton $w={43}>
            <LargeIcon><InsertIcon /></LargeIcon>
            <LargeLine>Insert</LargeLine>
            <LargeLine><Chevron /></LargeLine>
          </LargeButton>
          <LargeButton $w={43}>
            <LargeIcon><DeleteIcon /></LargeIcon>
            <LargeLine>Delete</LargeLine>
            <LargeLine><Chevron /></LargeLine>
          </LargeButton>
          <LargeButton $w={41}>
            <LargeIcon style={{ paddingBottom: 5 }}><FormatIcon /></LargeIcon>
            <LargeLine>Format</LargeLine>
            <LargeLine><Chevron /></LargeLine>
          </LargeButton>
        </GroupBody>
        <GroupTitle title="Cells" />
      </Group>

      <Group $w={200}>
        <GroupBody $pl={10}>
          <EditColumn>
            <EditRow>
              <ClipIcon><SigmaIcon /></ClipIcon>
              AutoSum
              <Tool $w={12} $ml={7}><Chevron /></Tool>
            </EditRow>
            <EditRow>
              <ClipIcon><FillDownIcon /></ClipIcon>
              Fill <Chevron />
            </EditRow>
            <EditRow>
              <ClipIcon><EraserIcon /></ClipIcon>
              Clear <Chevron />
            </EditRow>
          </EditColumn>
          <LargeButton $w={44}>
            <LargeIcon><SortFilterIcon /></LargeIcon>
            <LargeLine>Sort &amp;</LargeLine>
            <LargeLine>Filter <Chevron /></LargeLine>
          </LargeButton>
          <LargeButton $w={44}>
            <LargeIcon><FindIcon /></LargeIcon>
            <LargeLine>Find &amp;</LargeLine>
            <LargeLine>Select <Chevron /></LargeLine>
          </LargeButton>
        </GroupBody>
        <GroupTitle title="Editing" />
      </Group>

      <Group $w={58}>
        <GroupBody>
          <LargeButton $w={56} $dim>
            <LargeIcon><IdeasIcon /></LargeIcon>
            <LargeLine>Ideas</LargeLine>
          </LargeButton>
        </GroupBody>
        <GroupTitle title="Ideas" />
      </Group>
    </GroupRow>
  </RibbonWrap>
)

const Formula = ({ name, shift, value }: { name: string; shift: number; value: string }) => (
  <FormulaBar>
    <FormulaBox $w={93}>
      <NameText $shift={shift}>{name}</NameText>
      <svg width="8" height="5" viewBox="0 0 8 5" style={{ marginRight: 9 }}>
        <path d="M0 0h8L4 5z" fill="#777" />
      </svg>
    </FormulaBox>
    <Dots><i /><i /><i /></Dots>
    <FormulaBox $w={110} $ml={-1} style={{ justifyContent: 'space-around', paddingLeft: 6 }}>
      <svg width="11" height="11" viewBox="0 0 11 11" stroke="#bbb" strokeWidth="1.4"><path d="M1 1l9 9M10 1l-9 9" /></svg>
      <svg width="13" height="11" viewBox="0 0 13 11" fill="none" stroke="#bbb" strokeWidth="2"><path d="M1 6l4 4 7-9" /></svg>
      <FxText>fx</FxText>
    </FormulaBox>
    <FormulaBox $ml={4} style={{ paddingLeft: 11 }}>{value}</FormulaBox>
  </FormulaBar>
)

/* ---------- left window data ---------- */

const leftCols = '13px 119px 101px 192px 270px 207px 73px 144px 110px 70px 70px 33px'
const leftHeads = ['B', 'C', 'D', 'E', 'F', 'G', 'H', 'I', 'J', 'K', '']

const leftPeople = [
  { no: 65, name: 'Low Chin Joon', nric: 'S7810857F', nat: 'SING', date: '22-04-1978', sex: 'Male' },
  { no: 66, name: 'Angela Chia Swee Ling', nric: 'S9412592H', nat: 'SING', open: true, date: '30-03-1994', sex: 'Female' },
  { no: 67, name: 'Shalin Teng Shet Tin', nric: 'G2347048P', nat: 'MAL', open: true },
  { no: 68, name: 'Lai Jia Chee', nric: 'S9077336D', nat: 'MAL' },
  { no: 69, name: 'Teo Wan Ling', nric: 'S9414396I', nat: 'SING' },
  { no: 70, name: 'Lim Shanice', nric: 'S9716565C', nat: 'SING' },
  { no: 71, name: 'Zhao Xin', nric: 'G8244746L', nat: 'CHI' },
  { no: 72, name: 'Lee Yong Xiang', nric: 'S8723508D', nat: 'SING' },
  { no: 73, name: 'Lye Choon Kang', nric: 'G2025111K', nat: 'MAL' },
  { no: 74, name: 'Yong Zhi Jet Keath', nric: 'G2657442R', nat: 'MAL', open: true },
  { no: 75, name: 'Lim Zhi Shong', nric: 'G2794563K', nat: 'MAL' },
  { no: 76, name: 'Willson Chai Yee Shun', nric: 'G8681462K', nat: 'MAL', open: true },
  { no: 77, name: 'Yeo Li Ting', nric: 'G3458866Q', nat: 'MAL' },
  { no: 78, name: 'Lin Jia-Ying', nric: 'G5330023K', nat: 'TWN' },
]

const blankLeftRows = [79, 80, 81, 82, 83, 84, 85, 86, 87, 88, 89, 90, 91]

const LeftSheet = () => (
  <>
    <ColumnHeader $cols={leftCols} $height={19}>
      <Corner />
      {leftHeads.map((h) => (
        <ColumnCell key={h} $sel={h === 'F'}>{h}</ColumnCell>
      ))}
    </ColumnHeader>
    <RowsArea>
      {leftPeople.map((p) => (
        <SheetRow key={p.no} $cols={leftCols} $size={14.5}>
          <RowHead $sel><RowNumber>{p.no}</RowNumber></RowHead>
          <Cell $open={p.open}>{p.name}</Cell>
          <Cell />
          <Cell>{p.nric}</Cell>
          <Cell $right>{p.date ? 200 : ''}</Cell>
          <Cell $right $sel>{p.date}</Cell>
          <Cell>{p.sex}</Cell>
          <Cell />
          <Cell>{p.nat}</Cell>
          <Cell $right>200</Cell>
          <Cell />
          <Cell />
        </SheetRow>
      ))}
      {blankLeftRows.map((no) => (
        <SheetRow key={no} $cols={leftCols} $size={14.5}>
          <RowHead><RowNumber>{no}</RowNumber></RowHead>
          {leftHeads.map((h) => (
            <Cell key={h} />
          ))}
        </SheetRow>
      ))}
    </RowsArea>
    <TabBar>
      <SheetArrow $ml={11}>
        <svg width="6" height="9" viewBox="0 0 6 9"><path d="M6 0v9L0 4.500z" fill="#b0b0b0" /></svg>
      </SheetArrow>
      <SheetArrow $ml={21}>
        <svg width="6" height="9" viewBox="0 0 6 9"><path d="M0 0v9l6-4.500z" fill="#b0b0b0" /></svg>
      </SheetArrow>
      <SheetTab>Sheet1</SheetTab>
      <AddSheet>
        <svg width="17" height="17" viewBox="0 0 17 17" fill="none" stroke="#6b6b6b">
          <circle cx="8.500" cy="8.500" r="7.500" strokeWidth="1.200" />
          <path d="M8.500 4.500v8M4.500 8.500h8" strokeWidth="1.400" />
        </svg>
      </AddSheet>
    </TabBar>
    <StatusBar>
      <Ready>Ready</Ready>
      <StatusTools>
        <span style={{ width: 22 }}>5</span>
        <svg width="14" height="11" viewBox="0 0 14 11" fill="none" stroke="#555"><path d="M.5.500h13v8H.5zM4 10.500h6" /></svg>
        <span style={{ marginLeft: 8, width: 95 }}>Display Settings</span>
        <svg width="13" height="12" viewBox="0 0 13 12" fill="none" stroke="#444"><path d="M.5.500h12v11H.5zM.5 4.500h12M.5 8h12M4.500.500v11M8.500.500v11" /></svg>
        <svg width="13" height="12" viewBox="0 0 13 12" fill="none" stroke="#666" style={{ marginLeft: 15 }}><path d="M.5.500h12v11H.5zM3 3h7v8H3z" /></svg>
        <svg width="13" height="12" viewBox="0 0 13 12" fill="none" stroke="#666" style={{ marginLeft: 15 }}><path d="M.5.500h5v11h-5zM7.500.500h5v11h-5z" /></svg>
        <span style={{ marginLeft: 25 }}>–</span>
        <ZoomTrack />
        <span>+</span>
        <span style={{ marginLeft: 9 }}>100%</span>
      </StatusTools>
    </StatusBar>
  </>
)

/* ---------- right window data ---------- */

const rightCols = '11px 129px 210px 83px 92px 48px 67px 258px 182px 65px 25px'
const rightHeads = ['A', 'B', 'C', 'D', 'E', 'F', 'G', 'H', 'I', '']
const company = 'SUPER BEAN INTERNATIONAL PTE LTD'

const staff: [string, string, string, string, string, string][] = [
  ['1BDD', 'Ling Song Ho', 'S6840397I', '27-11-1968', 'M', 'SING'],
  ['1BRAND', 'Ang Soh Ting (Hong Shuting)', 'S8031878B', '12-10-1980', 'F', 'SING'],
  ['1BRAND', 'Kenny Kieran Ong', 'S8203951A', '24-01-1982', 'M', 'SING'],
  ['1CK', 'Foo See Fong', 'S0224162E', '07-08-1954', 'M', 'SING'],
  ['1CK', 'Seow Ah Lee', 'S0568031Z', '10-12-1944', 'F', 'SING'],
  ['1CK', 'Seah Eng Huat', 'S1019802Z', '24-07-1952', 'M', 'SING'],
  ['1CK', 'Tan Hock Ting', 'S1425931G', '02-01-1960', 'M', 'SING'],
  ['1CK', 'Zheng ChunZhu', 'S2596624D', '21-03-1966', 'F', 'SING'],
  ['1CK', 'Tin Than', 'S2734235C', '20-09-1958', 'M', 'MYR'],
  ['1CK', 'Chua Gek Heay', 'S6800571Z', '22-01-1968', 'F', 'SING'],
  ['1CK', 'Chan Chan Heng', 'S7009307C', '15-03-1970', 'M', 'SING'],
  ['1CK', 'Wang Lin', 'G2180500P', '19-06-1994', 'M', 'CHI'],
  ['1CK', 'Anuar Bin Ali', 'G2437236M', '14-04-1993', 'M', 'MAL'],
  ['1CK', 'Mohd Alif Bin Mohamed Ariffin', 'G2518568X', '18-09-1993', 'M', 'MAL'],
  ['1CK', 'Mohd Izwan Bin Kamaron', 'G2686574W', '01-06-1979', 'M', 'MAL'],
  ['1CK', 'Haryzul Khairil Fitri Bin Haris', 'G2778324X', '11-02-1997', 'M', 'MAL'],
  ['1CK', 'Hu WenPu', 'G2792467R', '07-08-1982', 'M', 'CHI'],
  ['1CK', 'Chua Zheng Beng', 'G2819911U', '04-03-1993', 'M', 'MAL'],
  ['1CK', 'Xu QuanGuo', 'G2934517T', '08-10-1978', 'M', 'CHI'],
  ['1CK', 'Li MingYou', 'G2957713M', '10-11-1985', 'M', 'CHI'],
  ['1CK', 'Tey Chong Yuen', 'G2987623T', '04-03-1997', 'M', 'MAL'],
  ['1CK', 'Lam Wing Phong', 'G7318110R', '15-10-1979', 'M', 'MAL'],
  ['1CK', 'Ng Mooi Hong', 'G8014627U', '26-02-1965', 'F', 'MAL'],
  ['1CK', 'Chua Zheng Chee', 'G8845280T', '31-03-2001', 'M', 'MAL'],
  ['1COD', 'Kang Kia Buay', 'S8141915I', '24-12-1981', 'F', 'SING'],
  ['1COD', 'Wong Lai Chin', 'S8783557Z', '27-02-1987', 'F', 'MAL'],
  ['1COD', 'Chin Pui San', 'G2031219Q', '18-08-1991', 'F', 'MAL'],
  ['1COD', 'Tay Sze Ling', 'G2034928Q', '17-11-1989', 'F', 'MAL'],
  ['1FIN', 'Tan Soh Yuen', 'S6927380G', '04-08-1969', 'F', 'SING'],
  ['1FIN', 'Lam Pooi Yee', 'S8684589Z', '28-01-1986', 'F', 'SING'],
  ['1FIN', 'Teo Dan Wei Fiona', 'S9102381D', '18-01-1991', 'F', 'SING'],
  ['1FIN', 'Chang Man Yee', 'G1701377M', '13-02-1997', 'F', 'MAL'],
  ['1FIN', 'Thong Yan Chin', 'G2228839N', '20-10-1987', 'F', 'MAL'],
]

const RightSheet = () => (
  <>
    <ColumnHeader $cols={rightCols} $height={17}>
      <Corner />
      {rightHeads.map((h) => (
        <ColumnCell key={h}>{h}</ColumnCell>
      ))}
    </ColumnHeader>
    <RowsArea>
      <SheetRow $cols={rightCols} $size={13}>
        <RowHead />
        <Cell $bold>Department</Cell>
        <Cell $bold>EMPLOYEE NAME</Cell>
        <Cell $bold>NRIC</Cell>
        <Cell $bold>BIRTH DATE</Cell>
        <Cell $bold>SEX</Cell>
        <Cell $bold>Nationality</Cell>
        <Cell $bold>COMPANY DESC</Cell>
        <Cell $bold>Balance as at 1st Apr 2020</Cell>
        <Cell />
        <Cell />
      </SheetRow>
      {staff.map(([dept, name, nric, birth, sex, nat], i) => (
        <SheetRow key={nric} $cols={rightCols} $size={13}>
          <RowHead>{i + 2 >= 10 && <RowNumber>{i + 2}</RowNumber>}</RowHead>
          <Cell>{dept}</Cell>
          <Cell>{name}</Cell>
          <Cell>{nric}</Cell>
          <Cell $right>{birth}</Cell>
          <Cell>{sex}</Cell>
          <Cell>{nat}</Cell>
          <Cell>{company}</Cell>
          <Cell $between>
            <span>$</span>
            <span>200.00</span>
          </Cell>
          <Cell>{sex === 'M' ? 'Male' : 'Female'}</Cell>
          <Cell />
        </SheetRow>
      ))}
    </RowsArea>
  </>
)

const QuickAccess = () => (
  <>
    <AutoSave>AutoSave</AutoSave>
    <Toggle>Off</Toggle>
    <QuickIcon $w={16} $ml={15}><SaveIcon /></QuickIcon>
    <QuickIcon $w={15} $ml={13}><UndoIcon /></QuickIcon>
    <QuickIcon $w={8} $ml={4}><Chevron color="#cfe2d7" /></QuickIcon>
    <QuickIcon $w={15} $ml={12}><RedoIcon /></QuickIcon>
    <QuickIcon $w={8} $ml={3}><Chevron color="#6ea98a" /></QuickIcon>
    <QuickIcon $w={8} $ml={14}><CustomizeIcon /></QuickIcon>
  </>
)

/* ---------- dialog ---------- */

const categories = ['General', 'Number', 'Currency', 'Accounting', 'Date', 'Time', 'Percentage', 'Fraction', 'Scientific', 'Text', 'Special', 'Custom']
const dateTypes = ['*3/14/2012', '*Wednesday, March 14, 2012', '2012-03-14', '3/14', '3/14/12', '03/14/12', '14-Mar']
const locales = ['English (Philippines)', 'English (Singapore)', 'English (South Africa)', 'English (Trinidad and Tobago)', 'English (United Kingdom)', 'English (United States)']
const dialogTabs = [
  { name: 'Number', w: 65 },
  { name: 'Alignment', w: 67 },
  { name: 'Font', w: 64 },
  { name: 'Border', w: 65 },
  { name: 'Fill', w: 65 },
  { name: 'Protection', w: 67 },
]

const FormatCellsDialog = () => (
  <Dialog>
    <DialogTitle>
      Format Cells
      <DialogHelp>?</DialogHelp>
      <DialogClose>
        <svg width="11" height="11" viewBox="0 0 11 11" stroke="#222"><path d="M.5.500l10 10M10.500.500l-10 10" /></svg>
      </DialogClose>
    </DialogTitle>
    <DialogContent>
      <DialogTabs>
        {dialogTabs.map((t) => (
          <DialogTab key={t.name} $w={t.w} $active={t.name === 'Number'}>{t.name}</DialogTab>
        ))}
      </DialogTabs>
      <Pane>
        <PaneGrid>
          <PaneColumn>
            <FieldLabel><u>C</u>ategory:</FieldLabel>
            <ListFrame $h={274} $border="#a0a0a0">
              <ListItems>
                {categories.map((c) => (
                  <ListItem key={c} $selected={c === 'Date'} style={{ marginLeft: 1 }}>{c}</ListItem>
                ))}
              </ListItems>
              <ListScroll $w={18}>
                <ScrollUp color="#c8c8c8" />
                <ScrollDown color="#c8c8c8" />
              </ListScroll>
            </ListFrame>
          </PaneColumn>
          <PaneColumn $pt={21}>
            <SampleGroup>
              <SampleLegend>Sample</SampleLegend>
              07/06/78
            </SampleGroup>
            <FieldLabel $mt={5}><u>T</u>ype:</FieldLabel>
            <ListFrame $h={98} $border="#8a8a8a">
              <ListItems>
                {dateTypes.map((d) => (
                  <ListItem key={d} $selected={d === '03/14/12'}>{d}</ListItem>
                ))}
              </ListItems>
              <ListScroll $w={18}>
                <ScrollUp color="#444" />
                <ScrollThumb $h={24} $top={4} />
                <ScrollDown color="#444" />
              </ListScroll>
            </ListFrame>
            <FieldLabel $mt={4}><u>L</u>ocale (location):</FieldLabel>
            <ComboValue>
              English (United States)
              <ComboButton><ScrollDown color="#444" /></ComboButton>
            </ComboValue>
            <DropList>
              <ListItems>
                {locales.map((l) => (
                  <ListItem key={l} $selected={l === 'English (Singapore)'}>{l}</ListItem>
                ))}
              </ListItems>
              <ListScroll $w={17}>
                <ScrollUp color="#444" />
                <ScrollThumb $h={16} $top={8} />
                <ScrollDown color="#444" />
              </ListScroll>
            </DropList>
          </PaneColumn>
        </PaneGrid>
        <HelpText>
          {'Date formats display date and time serial numbers as date values.  Date formats that begin with an asterisk\n(*) respond to changes in regional date and time settings that are specified for the operating system.\nFormats without an asterisk are not affected by operating system settings.'}
        </HelpText>
      </Pane>
      <DialogFooter>
        <DialogButton $primary>OK</DialogButton>
        <DialogButton>Cancel</DialogButton>
      </DialogFooter>
    </DialogContent>
  </Dialog>
)

const App = () => (
  <Page>
    <GlobalStyle />
    <LeftColumn>
      <Window $height={743}>
        <TitleBar $height={30}>
          <PatternArt left={963} />
          <TitleInner>
            <QuickAccess />
            <DocTitle $left={22} $width={290}>employee-list (3).xls  -  Compatibility Mode  -  Excel</DocTitle>
            <SearchBox><SearchIcon /> Search</SearchBox>
            <UserArea>
              <UserName>Binh Le</UserName>
              <Avatar>BL</Avatar>
              <WinIcon $ml={29}>
                <svg width="13" height="12" viewBox="0 0 13 12" fill="none" stroke="#d3e5db"><path d="M.5.500h12v11H.5zM.5 3.500h12M6.500 10V5.500M4.500 7.500l2-2 2 2" /></svg>
              </WinIcon>
              <WinIcon $ml={33}>
                <svg width="10" height="1" viewBox="0 0 10 1"><path d="M0 .5h10" stroke="#d3e5db" /></svg>
              </WinIcon>
              <WinIcon $ml={36}>
                <svg width="10" height="11" viewBox="0 0 10 11" fill="none" stroke="#d3e5db"><path d="M.5.500h9v10h-9z" /></svg>
              </WinIcon>
              <WinIcon $ml={32}>
                <svg width="11" height="11" viewBox="0 0 11 11" stroke="#d3e5db"><path d="M.5.500l10 10M10.500.500l-10 10" /></svg>
              </WinIcon>
            </UserArea>
          </TitleInner>
        </TitleBar>
        <Ribbon fontSize="11" numberFormat="Custom" />
        <Formula name="F78" shift={-2} value="7/6/1978" />
        <LeftSheet />
      </Window>
      <NoteCard>
        Prepare excep file
        <CodeChip>=IF(E2="M","Male",IF(E2="F","Female",""))</CodeChip>
      </NoteCard>
    </LeftColumn>

    <RightColumn>
      <Window $height={824}>
        <TitleBar $height={33}>
          <PatternArt left={1125} />
          <TitleInner>
            <QuickAccess />
            <DocTitle $left={79} $width={295}>Super Bean namelist as at Apr 2020.xlsx ▾</DocTitle>
            <SearchBox><SearchIcon /> Search</SearchBox>
          </TitleInner>
        </TitleBar>
        <Ribbon fontSize="10" numberFormat="Accounting" />
        <Formula name="H2" shift={-4} value="200" />
        <RightSheet />
      </Window>
    </RightColumn>

    <FormatCellsDialog />
  </Page>
)

export default App
